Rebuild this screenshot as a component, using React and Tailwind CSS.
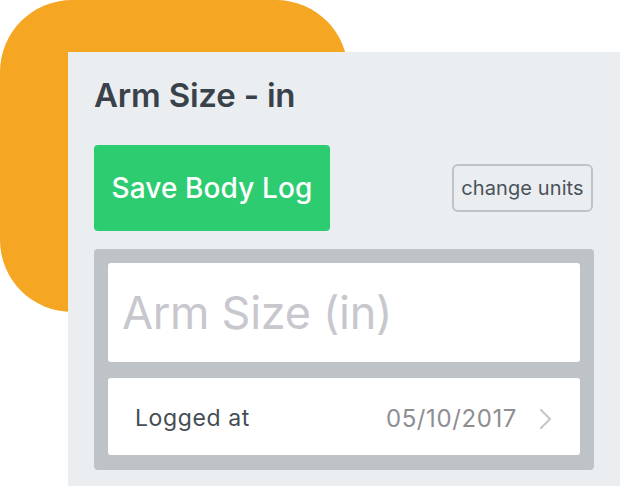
import React from 'react';

function Chevron() {
  return (
    <svg width="13" height="22" viewBox="0 0 13 22" fill="none">
      <path d="M2 2l9 9-9 9" stroke="#C7C7CC" strokeWidth="2.2" strokeLinecap="round" strokeLinejoin="round" />
    </svg>
  );
}

export default function App() {
  return (
    <div
      className="relative w-[620px] h-[486px] overflow-hidden bg-white"
      style={{ fontFamily: 'Inter, "Noto Sans", sans-serif' }}
    >
      {/* orange backdrop */}
      <div className="absolute left-0 top-0 w-[348px] h-[312px] rounded-[72px] bg-[#F5A623]" />

      {/* card panel */}
      <div className="absolute left-[68px] top-[52px] w-[560px] h-[440px] bg-[#EBEEF0] pl-[26px] pr-[34px]">
        <h1 className="mt-[23px] text-[33px] leading-[40px] font-semibold text-[#39424B] tracking-[-0.2px]">
          Arm Size - in
        </h1>

        <div className="mt-[30px] flex items-center justify-between w-[500px]">
          <button className="w-[236px] h-[86px] rounded-[4px] bg-[#2ECC71] text-white text-[28px] font-medium tracking-[0.1px]">
            Save Body Log
          </button>
          <button className="w-[141px] h-[48px] mr-[1px] rounded-[6px] border-2 border-[#BEC3C7] text-[20px] text-[#4A525A] tracking-[0.1px]">
            change units
          </button>
        </div>

        <div className="mt-[18px] w-[500px] rounded-[4px] bg-[#BEC3C7] p-[14px] pb-[15px] flex flex-col gap-[16px]">
          <div className="h-[99px] rounded-[3px] bg-white flex items-center pl-[14px]">
            <span className="text-[45px] text-[#C7C7CD] tracking-[-0.3px]">Arm Size (in)</span>
          </div>
          <div className="h-[77px] rounded-[3px] bg-white flex items-center pl-[27px] pr-[28px] pt-[4px]">
            <span className="text-[23px] text-[#454D55] tracking-[0.6px]">Logged at</span>
            <span className="ml-auto text-[24px] text-[#8E8E93] mr-[22px] tracking-[0.6px]">05/10/2017</span>
            <Chevron />
          </div>
        </div>
      </div>
    </div>
  );
}
